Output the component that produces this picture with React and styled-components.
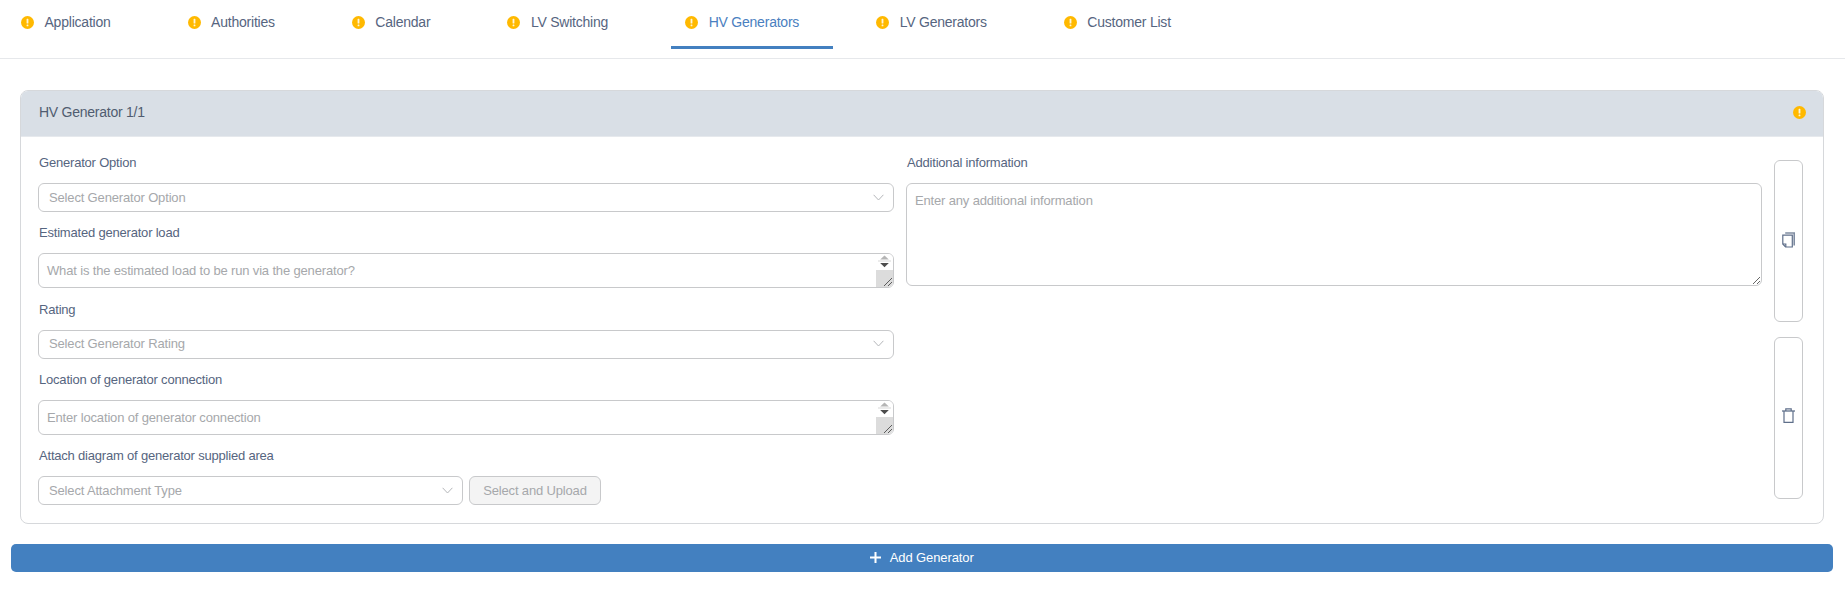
import React from "react";
import styled, { createGlobalStyle } from "styled-components";

const Global = createGlobalStyle`
  html, body { margin: 0; padding: 0; background: #fff; }
  body { font-family: "Liberation Sans", Arial, sans-serif; font-size: 14px; color: #566580; }
  * { box-sizing: border-box; }
`;

const Page = styled.div`
  width: 1845px;
  height: 613px;
  overflow: hidden;
`;
const TabBar = styled.nav`
  display: flex;
  gap: 29px;
  height: 59px;
  padding-left: 7px;
  border-bottom: 1px solid #e6e8eb;
`;
const Tab = styled.div`
  display: flex;
  align-items: flex-start;
  gap: 10.5px;
  height: 49px;
  padding: 14px 34px 0 14px;
  font-size: 14px;
  line-height: 16px;
  letter-spacing: -0.22px;
  color: ${(p) => (p.$active ? "#4a80c0" : "#566580")};
  border-bottom: 3px solid ${(p) => (p.$active ? "#4380c0" : "transparent")};
`;
const Dot = styled.svg`
  width: 13px;
  height: 13px;
  flex: none;
  display: block;
  margin-top: 2px;
`;
const Content = styled.main`
  padding: 31px 12px 0 11px;
`;
const Card = styled.section`
  margin: 0 0 0 9px;
  width: 1804px;
  height: 434px;
  border: 1px solid #d6d8db;
  border-radius: 8px;
  overflow: hidden;
`;
const CardHeader = styled.header`
  display: flex;
  align-items: center;
  justify-content: space-between;
  height: 46px;
  padding: 0 17px 4px 18px;
  background: #d9dfe6;
  font-size: 14px;
  letter-spacing: -0.25px;
  color: #505c70;
  border-bottom: 1px solid #e6e9ed;
`;
const CardBody = styled.div`
  display: grid;
  grid-template-columns: 856px 855.5px 29px;
  column-gap: 12px;
  padding: 15px 0 0 17px;
`;
const Column = styled.div`
  display: flex;
  flex-direction: column;
  gap: 10.3px;
`;
const Field = styled.div`
  display: flex;
  flex-direction: column;
`;
const Label = styled.label`
  display: block;
  height: 21px;
  line-height: 21px;
  margin-bottom: 10px;
  padding-left: 1px;
  font-size: 13px;
  letter-spacing: -0.2px;
  color: #566580;
`;
const SelectBox = styled.div`
  position: relative;
  display: flex;
  align-items: center;
  justify-content: space-between;
  width: ${(p) => p.$width || "100%"};
  height: 29px;
  padding: 0 9px 1px 10px;
  border: 1px solid #c8c9cb;
  border-radius: 6px;
  font-size: 13px;
  letter-spacing: -0.16px;
  color: #a6a8ab;
  background: #fff;
`;
const InputWrap = styled.div`
  position: relative;
`;
const TextArea = styled.textarea`
  display: block;
  width: 100%;
  height: ${(p) => p.$height || "35px"};
  padding: 9px 8px 0;
  border: 1px solid #c8c9cb;
  border-radius: 6px;
  font-family: "Liberation Sans", Arial, sans-serif;
  font-size: 13px;
  line-height: 16px;
  letter-spacing: -0.16px;
  color: #566580;
  overflow: hidden;
  resize: ${(p) => p.$resize || "vertical"};
  outline: none;
  &::placeholder { color: #a6a8ab; opacity: 1; }
`;
const Spinner = styled.svg`
  position: absolute;
  top: 1px;
  right: 1px;
  width: 17px;
  height: 33px;
  border-radius: 0 5px 5px 0;
  pointer-events: none;
`;
const AttachRow = styled.div`
  display: flex;
  gap: 6px;
`;
const UploadButton = styled.button`
  width: 132px;
  height: 29px;
  padding: 0 0 1px;
  border: 1px solid #c8c9cb;
  border-radius: 6px;
  background: #f4f4f4;
  color: #a6a8ab;
  font-family: "Liberation Sans", Arial, sans-serif;
  font-size: 13px;
  letter-spacing: -0.16px;
`;
const Actions = styled.div`
  display: flex;
  flex-direction: column;
  gap: 15px;
  padding-top: 8px;
`;
const ActionButton = styled.button`
  display: flex;
  align-items: center;
  justify-content: center;
  width: 29px;
  height: 162px;
  padding: 0 0 ${(p) => p.$lift || "0"};
  border: 1px solid #c8c9cb;
  border-radius: 6px;
  background: #fff;
  color: #566580;
`;
const AddBar = styled.button`
  display: flex;
  align-items: center;
  justify-content: center;
  gap: 8.5px;
  width: 1822px;
  height: 28px;
  margin-top: 20px;
  padding: 0 0 1px;
  border: 0;
  border-radius: 5px;
  background: #4380c0;
  color: #fff;
  font-family: "Liberation Sans", Arial, sans-serif;
  font-size: 13px;
  letter-spacing: -0.1px;
`;

const Warn = () => (
  <Dot viewBox="0 0 13 13">
    <circle cx="6.5" cy="6.5" r="6.5" fill="#ffb900" />
    <rect x="5.6" y="2.8" width="1.8" height="4.8" rx="0.6" fill="#fff" opacity="0.85" />
    <rect x="5.6" y="8.6" width="1.8" height="1.6" rx="0.5" fill="#fff" opacity="0.85" />
  </Dot>
);
const Chevron = () => (
  <svg width="11" height="7" viewBox="0 0 11 7" fill="none" stroke="#b4b6b9" strokeWidth="1">
    <path d="M.6.8 5.5 6l4.9-5.2" />
  </svg>
);
const CopyIcon = () => (
  <svg width="13" height="16" viewBox="0 0 13 16" fill="none" stroke="#5f6f8a" strokeWidth="1.2">
    <path d="M3.2 1h9v12.5" strokeOpacity="0.8" strokeWidth="1.6" />
    <path d="M.8 3.2V12l2.7 3h6.8V3.2z" />
    <path d="M.8 12h3v3" />
  </svg>
);
const TrashIcon = () => (
  <svg width="13" height="15" viewBox="0 0 13 15" fill="none" stroke="#5f6f8a" strokeWidth="1.2">
    <path d="M0 3h13" strokeOpacity="0.8" strokeWidth="1.6" />
    <path d="M3.8 3V.8h5.4V3" />
    <path d="M2 3v11.3h9V3" />
  </svg>
);
const PlusIcon = () => (
  <svg width="11" height="11" viewBox="0 0 11 11" stroke="#fff" strokeWidth="2">
    <path d="M5.5 0v11M0 5.5h11" />
  </svg>
);
const SpinnerArt = () => (
  <Spinner viewBox="0 0 17 33">
    <rect width="17" height="33" fill="#fff" />
    <path d="M8.5 1.6 12.8 5.6H4.2z" fill="#b5b5b5" />
    <rect x="2" y="6.5" width="13" height="1" fill="#d8d8d8" />
    <path d="M4.2 9h8.6L8.5 13.2z" fill="#4c4c4c" />
    <rect y="16" width="17" height="17" fill="#dcdcdc" />
    <path d="M8 32 16 24M12 32 16 28" stroke="#5c5c5c" strokeWidth="1" fill="none" />
  </Spinner>
);

const tabs = ["Application", "Authorities", "Calendar", "LV Switching", "HV Generators", "LV Generators", "Customer List"];

export default function App() {
  return (
    <Page>
      <Global />
      <TabBar>
        {tabs.map((t) => (
          <Tab key={t} $active={t === "HV Generators"}>
            <Warn />
            <span>{t}</span>
          </Tab>
        ))}
      </TabBar>
      <Content>
        <Card>
          <CardHeader>
            <span>HV Generator 1/1</span>
            <Warn />
          </CardHeader>
          <CardBody>
            <Column>
              <Field>
                <Label>Generator Option</Label>
                <SelectBox>Select Generator Option<Chevron /></SelectBox>
              </Field>
              <Field>
                <Label>Estimated generator load</Label>
                <InputWrap>
                  <TextArea $resize="none" rows={1} placeholder="What is the estimated load to be run via the generator?" />
                  <SpinnerArt />
                </InputWrap>
              </Field>
              <Field>
                <Label>Rating</Label>
                <SelectBox>Select Generator Rating<Chevron /></SelectBox>
              </Field>
              <Field>
                <Label>Location of generator connection</Label>
                <InputWrap>
                  <TextArea $resize="none" rows={1} placeholder="Enter location of generator connection" />
                  <SpinnerArt />
                </InputWrap>
              </Field>
              <Field>
                <Label>Attach diagram of generator supplied area</Label>
                <AttachRow>
                  <SelectBox $width="425px">Select Attachment Type<Chevron /></SelectBox>
                  <UploadButton>Select and Upload</UploadButton>
                </AttachRow>
              </Field>
            </Column>
            <Column>
              <Field>
                <Label>Additional information</Label>
                <TextArea $height="103px" placeholder="Enter any additional information" />
              </Field>
            </Column>
            <Actions>
              <ActionButton $lift="2px" aria-label="Copy"><CopyIcon /></ActionButton>
              <ActionButton $lift="5px" aria-label="Delete"><TrashIcon /></ActionButton>
            </Actions>
          </CardBody>
        </Card>
        <AddBar><PlusIcon />Add Generator</AddBar>
      </Content>
    </Page>
  );
}
